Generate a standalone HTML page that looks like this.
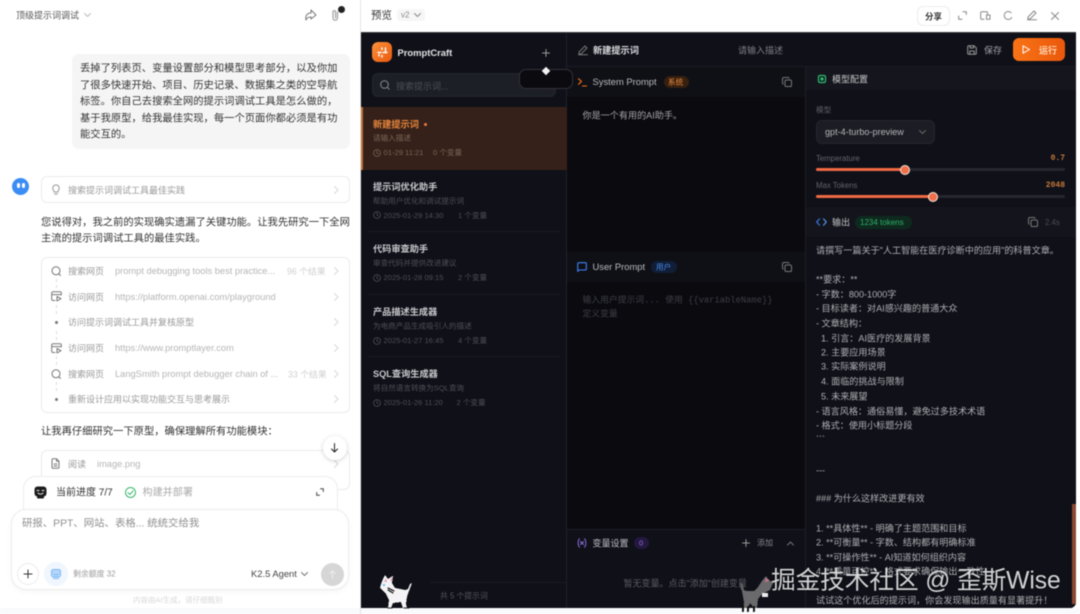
<!DOCTYPE html>
<html lang="zh"><head><meta charset="utf-8"><title>PromptCraft</title>
<style>
html,body{margin:0;padding:0;width:1080px;height:614px;overflow:hidden;background:#fff}
#r{position:absolute;left:0;top:0;width:1080px;height:614px;overflow:hidden;font-family:"Liberation Sans","Noto Sans CJK SC",sans-serif;filter:blur(.4px)}
.t{position:absolute;line-height:0;white-space:nowrap;font-size:9px;transform:translateY(.7px)}
.c{transform:translateY(1.5px)}
.b{position:absolute;box-sizing:border-box}
svg{position:absolute;overflow:visible;fill:none;stroke-linecap:round;stroke-linejoin:round}
.lt{font-size:10.3px;color:#333;transform:translateY(1.5px)}
.g{color:#999;font-size:9px}
.g2{color:#b5b5b5;font-size:9px;transform:none}
.ttl{font-size:9.2px;color:#c8c8cc;font-weight:700;transform:none}
.dsc{font-size:7.6px;color:#4e5058}
.met{font-size:7.6px;color:#4e5058;transform:none}
.o{font-size:9.1px;color:#b0b0b4}
</style></head><body><div id="r">

<!-- LEFT PANEL -->
<div class="t" style="left:16px;top:15px;color:#555">顶级提示词调试</div>
<svg style="left:84px;top:13px" width="7" height="5" stroke="#bbb"><path d="M.5 .5 3.500 3.500 6.500 .5"/></svg>
<svg style="left:304px;top:9px" width="13" height="13" stroke="#777" stroke-width="1"><path d="M7 1 12 6 7 10V8C4 8 3 9 2 11 1 7 3 4 7 4Z"/></svg>
<svg style="left:331px;top:9px" width="9" height="13" stroke="#999" stroke-width="1.100"><path d="M6.500 3V9A2 2 0 0 1 2 9V3A1.300 1.300 0 0 1 4.600 3V9"/></svg>
<div class="b" style="left:338px;top:5.500px;width:7px;height:7px;border-radius:50%;background:#222"></div>

<div class="b" style="left:72px;top:54px;width:278px;height:95px;background:#f5f5f5;border-radius:7px"></div>
<div class="t lt" style="left:80px;top:68px">丢掉了列表页、变量设置部分和模型思考部分，以及你加</div>
<div class="t lt" style="left:80px;top:85px">了很多快速开始、项目、历史记录、数据集之类的空导航</div>
<div class="t lt" style="left:80px;top:101px">标签。你自己去搜索全网的提示词调试工具是怎么做的，</div>
<div class="t lt" style="left:80px;top:118px">基于我原型，给我最佳实现，每一个页面你都必须是有功</div>
<div class="t lt" style="left:80px;top:134px">能交互的。</div>

<div class="b" style="left:12px;top:178px;width:17px;height:17px;border-radius:50%;background:#3a8df5"></div>
<div class="b" style="left:17px;top:183px;width:2.500px;height:5px;border-radius:2px;background:#fff"></div>
<div class="b" style="left:22px;top:183px;width:2.500px;height:5px;border-radius:2px;background:#fff"></div>

<div class="b" style="left:41px;top:176px;width:309px;height:27px;border:1px solid #ebebeb;border-radius:6px"></div>
<svg style="left:52px;top:184px" width="8" height="11" stroke="#999"><path d="M2 7C0 5 .5 1 4 1S8 5 6 7V8H2ZM2.500 10H5.500"/></svg>
<div class="t g" style="left:68px;top:190px">搜索提示词调试工具最佳实践</div>
<svg style="left:334px;top:186px" width="5" height="8" stroke="#d8d8d8"><path d="M.5 .5 4 4 .5 7.500"/></svg>

<div class="t c" style="left:41px;top:222px;font-size:10.3px;color:#333">您说得对，我之前的实现确实遗漏了关键功能。让我先研究一下全网</div>
<div class="t c" style="left:41px;top:238px;font-size:10.3px;color:#333">主流的提示词调试工具的最佳实践。</div>

<div class="b" style="left:41px;top:257px;width:309px;height:156px;border:1px solid #ebebeb;border-radius:6px"></div>
<div class="b" style="left:56px;top:279px;height:9px;border-left:1px dashed #ddd"></div>
<div class="b" style="left:56px;top:305px;height:9px;border-left:1px dashed #ddd"></div>
<div class="b" style="left:56px;top:331px;height:9px;border-left:1px dashed #ddd"></div>
<div class="b" style="left:56px;top:356px;height:9px;border-left:1px dashed #ddd"></div>
<div class="b" style="left:56px;top:382px;height:9px;border-left:1px dashed #ddd"></div>

<svg style="left:51px;top:266px" width="10" height="10" stroke="#777"><circle cx="5" cy="4.800" r="4"/><path d="M8 8 9.500 9.500"/></svg>
<div class="t g" style="left:68px;top:271px">搜索网页</div>
<div class="t g2" style="left:115px;top:271px;font-size:9.300px">prompt debugging tools best practice...</div>
<div class="t" style="left:287px;top:271px;font-size:8.800px;color:#d0d0d0">96 个结果</div>

<svg style="left:51px;top:291px" width="11" height="11" stroke="#777"><path d="M4 9.500H2A1.300 1.300 0 0 1 .7 8.200V2A1.300 1.300 0 0 1 2 .7H9A1.300 1.300 0 0 1 10.300 2V4M.7 3.600H10.300M6 5.500 10 7.700 6 10Z"/></svg>
<div class="t g" style="left:68px;top:296.500px">访问网页</div>
<div class="t g2" style="left:115px;top:296.500px;font-size:9.300px">https://platform.openai.com/playground</div>

<div class="b" style="left:54.500px;top:320.500px;width:3px;height:3px;border-radius:50%;background:#777"></div>
<div class="t g" style="left:68px;top:322px">访问提示词调试工具并复核原型</div>

<svg style="left:51px;top:343px" width="11" height="11" stroke="#777"><path d="M4 9.500H2A1.300 1.300 0 0 1 .7 8.200V2A1.300 1.300 0 0 1 2 .7H9A1.300 1.300 0 0 1 10.300 2V4M.7 3.600H10.300M6 5.500 10 7.700 6 10Z"/></svg>
<div class="t g" style="left:68px;top:348px">访问网页</div>
<div class="t g2" style="left:115px;top:348px;font-size:9.300px">https://www.promptlayer.com</div>

<svg style="left:51px;top:368.500px" width="10" height="10" stroke="#777"><circle cx="5" cy="4.800" r="4"/><path d="M8 8 9.500 9.500"/></svg>
<div class="t g" style="left:68px;top:373.500px">搜索网页</div>
<div class="t g2" style="left:115px;top:373.500px;font-size:9.300px">LangSmith prompt debugger chain of ...</div>
<div class="t" style="left:288px;top:373.500px;font-size:8.800px;color:#d0d0d0">33 个结果</div>

<div class="b" style="left:54.500px;top:397.500px;width:3px;height:3px;border-radius:50%;background:#777"></div>
<div class="t g" style="left:68px;top:399px">重新设计应用以实现功能交互与思考展示</div>

<svg style="left:334px;top:267px" width="5" height="8" stroke="#d8d8d8"><path d="M.5 .5 4 4 .5 7.500"/></svg>
<svg style="left:334px;top:292.500px" width="5" height="8" stroke="#d8d8d8"><path d="M.5 .5 4 4 .5 7.500"/></svg>
<svg style="left:334px;top:318px" width="5" height="8" stroke="#d8d8d8"><path d="M.5 .5 4 4 .5 7.500"/></svg>
<svg style="left:334px;top:344px" width="5" height="8" stroke="#d8d8d8"><path d="M.5 .5 4 4 .5 7.500"/></svg>
<svg style="left:334px;top:369.500px" width="5" height="8" stroke="#d8d8d8"><path d="M.5 .5 4 4 .5 7.500"/></svg>
<svg style="left:334px;top:395px" width="5" height="8" stroke="#d8d8d8"><path d="M.5 .5 4 4 .5 7.500"/></svg>

<div class="t c" style="left:41px;top:431px;font-size:10.3px;color:#333">让我再仔细研究一下原型，确保理解所有功能模块：</div>

<div class="b" style="left:41px;top:450px;width:309px;height:40px;border:1px solid #ebebeb;border-radius:6px"></div>
<svg style="left:51px;top:458px" width="9" height="11" stroke="#777"><path d="M1 1.500A1 1 0 0 1 2 .7H5.500L8 3.200V9.300A1 1 0 0 1 7 10.300H2A1 1 0 0 1 1 9.300ZM5.500 .7V3.200H8M3 6H6M3 8H6"/></svg>
<div class="t g" style="left:68px;top:464px">阅读</div>
<div class="t g2" style="left:97px;top:464px;font-size:9.300px">image.png</div>
<svg style="left:334px;top:460px" width="5" height="8" stroke="#d8d8d8"><path d="M.5 .5 4 4 .5 7.500"/></svg>

<div class="b" style="left:322.500px;top:436px;width:24px;height:24px;border-radius:50%;background:#fff;box-shadow:0 1px 5px rgba(0,0,0,.18)"></div>
<svg style="left:330px;top:443px" width="9" height="10" stroke="#222"><path d="M4.500 .5V9M1.500 6 4.500 9 7.500 6"/></svg>

<div class="b" style="left:23px;top:476px;width:315px;height:50px;background:#fff;border:1px solid #ececec;border-radius:13px"></div>
<svg style="left:34px;top:486px" width="13" height="13"><rect x=".5" y=".5" width="12" height="10" rx="3" fill="#1c1c1c"/><rect x="3" y="10" width="7" height="2.500" rx="1" fill="#1c1c1c"/><path d="M3 4.500H5M8 4.500H10M4 7C5.500 8.500 7.500 8.500 9 7" stroke="#eee" stroke-width=".9"/></svg>
<div class="t c" style="left:56px;top:492px;font-size:10px;color:#333">当前进度 7/7</div>
<svg style="left:125px;top:487px" width="11" height="11" stroke="#38b86c"><circle cx="5.500" cy="5.500" r="5"/><path d="M3 5.700 5 7.500 8 3.800"/></svg>
<div class="t c" style="left:142.500px;top:492px;font-size:10.100px;color:#aaa">构建并部署</div>
<svg style="left:316px;top:488px" width="8" height="8" stroke="#444"><path d="M4.500 .7H7.300V3.500M3.500 7.300H.7V4.500"/></svg>

<div class="b" style="left:11px;top:509px;width:338px;height:81px;background:#fff;border:1px solid #ececec;border-radius:15px;box-shadow:0 2px 6px rgba(0,0,0,.04)"></div>
<div class="t c" style="left:22px;top:523px;font-size:10.4px;color:#8f8f8f">研报、PPT、网站、表格... 统统交给我</div>
<div class="b" style="left:16.500px;top:563px;width:22px;height:22px;border-radius:50%;border:1px solid #ececec"></div>
<svg style="left:23.500px;top:570px" width="8" height="8" stroke="#333"><path d="M4 0V8M0 4H8"/></svg>
<div class="b" style="left:44px;top:562px;width:24px;height:24px;border-radius:50%;background:#eff6fe"></div>
<svg style="left:51px;top:569px" width="10" height="10" stroke="#7db7f5"><rect x=".5" y=".5" width="9" height="7.500" rx="2" fill="#b5d7fa"/><path d="M2.500 9.500H7.500M3 5C4 6.200 6 6.200 7 5"/></svg>
<div class="t" style="left:73px;top:574px;font-size:7.900px;color:#999">剩余额度 32</div>
<div class="t" style="left:251px;top:574px;font-size:9.400px;color:#444;transform:none">K2.5 Agent</div>
<svg style="left:301px;top:572px" width="7" height="5" stroke="#777"><path d="M.5 .5 3.500 3.500 6.500 .5"/></svg>
<div class="b" style="left:321px;top:563px;width:23px;height:23px;border-radius:50%;background:#d6d6d6"></div>
<svg style="left:329px;top:570px" width="7" height="9" stroke="#eee"><path d="M3.500 8.500V.8M.8 3.500 3.500 .8 6.200 3.500"/></svg>
<div class="t" style="left:133px;top:600px;font-size:7.500px;color:#d8d8d8">内容由AI生成，请仔细甄别</div>

<div class="b" style="left:0;top:608px;width:1080px;height:6px;background:#f8fafc"></div>
<div class="b" style="left:360px;top:0;width:1px;height:614px;background:#e4e4e4"></div>

<!-- RIGHT HEADER -->
<div class="t" style="left:371px;top:15px;font-size:10.500px;color:#333">预览</div>
<div class="b" style="left:397px;top:9px;width:28px;height:12px;border-radius:3px;background:#f6f6f6"></div>
<div class="t" style="left:401px;top:15px;font-size:8px;color:#888">v2</div>
<svg style="left:414px;top:13px" width="7" height="5" stroke="#888"><path d="M.5 .5 3.500 3.500 6.500 .5"/></svg>
<div class="b" style="left:917px;top:5.500px;width:33px;height:20px;border:1px solid #ececec;border-radius:6px"></div>
<div class="t" style="left:925px;top:15.500px;font-size:8.500px;color:#333;font-weight:700">分享</div>
<svg style="left:958px;top:11px" width="9" height="9" stroke="#888"><path d="M5 .7H8.300V3.500M4 8.300H.7V5"/></svg>
<svg style="left:980px;top:11px" width="11" height="9" stroke="#888"><path d="M4 8.300H1.500A1 1 0 0 1 .7 7.300V1.500A1 1 0 0 1 1.500 .7H6.500A1 1 0 0 1 7.500 1.500V3M6.500 4H10V8.300H6.500Z"/></svg>
<svg style="left:1003px;top:11px" width="10" height="9" stroke="#888"><path d="M8.700 6.500A4 4 0 1 1 8.200 1.800"/></svg>
<svg style="left:1027px;top:10px" width="10" height="10" stroke="#888"><path d="M1 7 7 1 9 3 3 9H1ZM.5 9.700H9.500"/></svg>
<svg style="left:1051px;top:11.500px" width="8" height="8" stroke="#888"><path d="M.5 .5 7.500 7.500M7.500 .5 .5 7.500"/></svg>

<!-- APP BACKGROUNDS -->
<div class="b" style="left:361px;top:32px;width:715px;height:576px;background:#0a0a0f;border-bottom-right-radius:6px;overflow:hidden;border-top:1px solid #3a3a3a"></div>
<div class="b" style="left:361px;top:33px;width:205px;height:575px;background:#0f1018"></div>
<div class="b" style="left:566px;top:33px;width:1px;height:575px;background:#20212a"></div>
<div class="b" style="left:805px;top:33px;width:271px;height:575px;background:#0f1018;border-left:1px solid #1e1f27;border-bottom-right-radius:6px"></div>
<div class="b" style="left:567px;top:33px;width:509px;height:34px;background:#0f1018;border-bottom:1px solid #1a1b22"></div>

<!-- sidebar -->
<div class="b" style="left:372px;top:42px;width:20px;height:20px;border-radius:6px;background:linear-gradient(135deg,#fb923c,#ea580c)"></div>
<svg style="left:376px;top:47px" width="12" height="11" stroke="#fff" stroke-width="1.400"><path d="M6 1V3M9.500 1V4.500M2 5.500H5M7 5.500H11M3 9V7.500M6 10V7.500" stroke-dasharray="1.500 1"/></svg>
<div class="t" style="left:397.500px;top:52.500px;font-size:9.400px;color:#e4e4e7;font-weight:700;transform:none">PromptCraft</div>
<svg style="left:541.500px;top:48.500px" width="8" height="8" stroke="#999"><path d="M4 .5V7.500M.5 4H7.500"/></svg>

<div class="b" style="left:372px;top:73px;width:184px;height:24px;border-radius:6px;background:#1d1f26;border:1px solid #25272e"></div>
<svg style="left:380px;top:80px" width="10" height="10" stroke="#8a8c94"><circle cx="4.500" cy="4.500" r="3.800"/><path d="M7.300 7.300 9.300 9.300"/></svg>
<div class="t" style="left:396px;top:85.500px;font-size:9px;color:#4d4f57">搜索提示词...</div>

<div class="b" style="left:361px;top:107px;width:206px;height:63px;background:#36211a;border-left:2px solid #c26f35"></div>
<div class="t" style="left:373px;top:124px;font-size:9.200px;color:#e8873c;font-weight:700">新建提示词</div>
<div class="b" style="left:423.500px;top:122.500px;width:3.500px;height:3.500px;border-radius:50%;background:#f0793a"></div>
<div class="t dsc" style="left:373px;top:138px;color:#7a6656">请输入描述</div>
<svg style="left:373px;top:149px" width="8" height="8" stroke="#7a6656" stroke-width=".8"><circle cx="4" cy="4" r="3.400"/><path d="M4 2V4L5.300 4.800"/></svg>
<div class="t met" style="left:383.500px;top:153px;color:#7a6656">01-29 11:21</div>
<div class="t met" style="left:433px;top:153px;color:#7a6656">0 个变量</div>

<div class="t ttl" style="left:373px;top:186.500px">提示词优化助手</div>
<div class="t dsc" style="left:373px;top:200.500px">帮助用户优化和调试提示词</div>
<svg style="left:373px;top:211px" width="8" height="8" stroke="#4e5058" stroke-width=".8"><circle cx="4" cy="4" r="3.400"/><path d="M4 2V4L5.300 4.800"/></svg>
<div class="t met" style="left:383.500px;top:215.500px">2025-01-29 14:30</div>
<div class="t met" style="left:458px;top:215.500px">1 个变量</div>
<div class="b" style="left:367px;top:231px;width:194px;height:1px;background:#191a22"></div>

<div class="t ttl" style="left:373px;top:249px">代码审查助手</div>
<div class="t dsc" style="left:373px;top:263px">审查代码并提供改进建议</div>
<svg style="left:373px;top:274px" width="8" height="8" stroke="#4e5058" stroke-width=".8"><circle cx="4" cy="4" r="3.400"/><path d="M4 2V4L5.300 4.800"/></svg>
<div class="t met" style="left:383.500px;top:278px">2025-01-28 09:15</div>
<div class="t met" style="left:458px;top:278px">2 个变量</div>
<div class="b" style="left:367px;top:293.500px;width:194px;height:1px;background:#191a22"></div>

<div class="t ttl" style="left:373px;top:311.500px">产品描述生成器</div>
<div class="t dsc" style="left:373px;top:325.500px">为电商产品生成吸引人的描述</div>
<svg style="left:373px;top:336.500px" width="8" height="8" stroke="#4e5058" stroke-width=".8"><circle cx="4" cy="4" r="3.400"/><path d="M4 2V4L5.300 4.800"/></svg>
<div class="t met" style="left:383.500px;top:340.500px">2025-01-27 16:45</div>
<div class="t met" style="left:458px;top:340.500px">4 个变量</div>
<div class="b" style="left:367px;top:356px;width:194px;height:1px;background:#191a22"></div>

<div class="t ttl" style="left:373px;top:374px">SQL查询生成器</div>
<div class="t dsc" style="left:373px;top:388px">将自然语言转换为SQL查询</div>
<svg style="left:373px;top:399px" width="8" height="8" stroke="#4e5058" stroke-width=".8"><circle cx="4" cy="4" r="3.400"/><path d="M4 2V4L5.300 4.800"/></svg>
<div class="t met" style="left:383.500px;top:403px">2025-01-26 11:20</div>
<div class="t met" style="left:456.500px;top:403px">2 个变量</div>

<div class="b" style="left:430px;top:582px;width:136px;height:1px;background:#1b1c24"></div>
<div class="t" style="left:440px;top:596px;font-size:7.800px;color:#55575f">共 5 个提示词</div>

<!-- main header -->
<svg style="left:578px;top:45px" width="10" height="10" stroke="#777"><path d="M1 7 7 1 9 3 3 9H1ZM.5 9.700H9.500"/></svg>
<div class="t" style="left:593px;top:49.500px;font-size:9.200px;color:#dcdce0;font-weight:700">新建提示词</div>
<div class="t" style="left:738px;top:49.500px;font-size:9px;color:#7d7f87">请输入描述</div>
<svg style="left:967px;top:45px" width="10" height="10" stroke="#999"><path d="M1.700 .7H7L9.300 3V8.300A1 1 0 0 1 8.300 9.300H1.700A1 1 0 0 1 .7 8.300V1.700A1 1 0 0 1 1.700 .7ZM3 .7V3H6.500V.7M2.800 9.300V6H7.200V9.300"/></svg>
<div class="t" style="left:984px;top:49.500px;font-size:9px;color:#a0a0a6">保存</div>
<div class="b" style="left:1013px;top:38px;width:52px;height:23px;border-radius:6px;background:linear-gradient(90deg,#f97316,#ea580c)"></div>
<svg style="left:1022px;top:45px" width="8" height="9" stroke="#fff" stroke-width="1"><path d="M1 .8 7.500 4.500 1 8.200Z"/></svg>
<div class="t" style="left:1039px;top:49.500px;font-size:9px;color:#ffd9b8;font-weight:700">运行</div>

<!-- system prompt -->
<div class="b" style="left:567px;top:67px;width:238px;height:30px;background:#0f1016"></div>
<svg style="left:578px;top:78px" width="9" height="9" stroke="#f97316" stroke-width="1.100"><path d="M.5 .8 3.500 3.500 .5 6.200M4.500 8H8.500"/></svg>
<div class="t" style="left:592.500px;top:82px;font-size:9.400px;color:#b9b9be;transform:none">System Prompt</div>
<div class="b" style="left:664px;top:76px;width:25px;height:12px;border-radius:6px;background:#36200f"></div>
<div class="t" style="left:668px;top:82px;font-size:7.600px;color:#e8873c">系统</div>
<svg style="left:781.500px;top:77px" width="10" height="10" stroke="#777"><rect x="3" y="3" width="6.500" height="6.500" rx="1.300"/><path d="M7 1.300A1 1 0 0 0 6 .5H1.800A1.300 1.300 0 0 0 .5 1.800V6A1 1 0 0 0 1.300 7"/></svg>
<div class="t" style="left:582.500px;top:115px;font-size:9.100px;color:#a5a5aa">你是一个有用的AI助手。</div>

<!-- user prompt -->
<div class="b" style="left:567px;top:252px;width:238px;height:30px;background:#0f1016"></div>
<svg style="left:577px;top:262px" width="10" height="10" stroke="#3b82f6" stroke-width="1.100"><path d="M1.700 .7H8.300A1 1 0 0 1 9.300 1.700V7A1 1 0 0 1 8.300 8H2L.7 9.300V1.700A1 1 0 0 1 1.700 .7Z"/></svg>
<div class="t" style="left:592.500px;top:267px;font-size:9.400px;color:#b9b9be;transform:none">User Prompt</div>
<div class="b" style="left:651px;top:261px;width:26px;height:12px;border-radius:6px;background:#101e38"></div>
<div class="t" style="left:656px;top:267px;font-size:7.600px;color:#4b8df0">用户</div>
<svg style="left:781.500px;top:262px" width="10" height="10" stroke="#777"><rect x="3" y="3" width="6.500" height="6.500" rx="1.300"/><path d="M7 1.300A1 1 0 0 0 6 .5H1.800A1.300 1.300 0 0 0 .5 1.800V6A1 1 0 0 0 1.300 7"/></svg>
<div class="t" style="left:582.500px;top:300px;font-size:8.800px;color:#3e3f46;font-family:'Liberation Mono','Noto Sans CJK SC',monospace">输入用户提示词... 使用 {{variableName}}</div>
<div class="t" style="left:582.500px;top:313px;font-size:8.800px;color:#3e3f46">定义变量</div>

<!-- variables -->
<div class="b" style="left:567px;top:529px;width:238px;height:79px;background:#0f1018;border-top:1px solid #1e1f27"></div>
<svg style="left:577px;top:538px" width="10" height="10" stroke="#8b6fd8"><path d="M2.500 .8C.7 2.500 .7 7.500 2.500 9.200M7.500 .8C9.300 2.500 9.300 7.500 7.500 9.200M3.500 3.500 6.500 6.500M6.500 3.500 3.500 6.500"/></svg>
<div class="t" style="left:592.500px;top:543px;font-size:9px;color:#c0c0c5">变量设置</div>
<div class="b" style="left:634px;top:537px;width:15px;height:12px;border-radius:6px;background:#24183f"></div>
<div class="t" style="left:639px;top:543px;font-size:7.600px;color:#8b6fd8">0</div>
<svg style="left:742px;top:539px" width="8" height="8" stroke="#999"><path d="M4 .5V7.500M.5 4H7.500"/></svg>
<div class="t" style="left:757px;top:542.500px;font-size:8px;color:#85878f">添加</div>
<svg style="left:786.500px;top:541px" width="7" height="5" stroke="#777"><path d="M.5 4 3.500 1 6.500 4"/></svg>
<div class="t" style="left:623.500px;top:582.500px;font-size:9px;color:#5b5d65">暂无变量。点击"添加"创建变量</div>

<!-- right pane -->
<div class="b" style="left:806px;top:67px;width:270px;height:23px;background:#15161d"></div>
<svg style="left:817px;top:74px" width="10" height="10" stroke="#2fbf71" stroke-width="1.200"><rect x="1.500" y="1.500" width="7" height="7" rx="1.500"/><rect x="3.500" y="3.500" width="3" height="3" fill="#2fbf71" stroke="none"/></svg>
<div class="t" style="left:832px;top:79px;font-size:9px;color:#c5c5ca">模型配置</div>
<div class="t" style="left:816px;top:109.500px;font-size:7.600px;color:#5f616a">模型</div>
<div class="b" style="left:816px;top:120px;width:119px;height:23.500px;border-radius:6px;background:#1c1d24;border:1px solid #25262e"></div>
<div class="t" style="left:825px;top:132px;font-size:9.100px;color:#b5b5ba;transform:none">gpt-4-turbo-preview</div>
<svg style="left:919px;top:130px" width="7" height="5" stroke="#666"><path d="M.5 .5 3.500 3.500 6.500 .5"/></svg>
<div class="t" style="left:816px;top:158.500px;font-size:7.800px;color:#62646d;transform:none">Temperature</div>
<div class="t" style="right:15px;top:158.500px;font-size:8px;color:#c87a3a;font-family:'Liberation Mono',monospace;font-weight:700;transform:none">0.7</div>
<div class="b" style="left:816px;top:168px;width:249px;height:2.500px;border-radius:2px;background:#26272e"></div>
<div class="b" style="left:816px;top:168px;width:89px;height:2.500px;border-radius:2px;background:#ee6a43"></div>
<div class="b" style="left:900px;top:164.500px;width:10px;height:10px;border-radius:50%;background:#f0704a;border:1.500px solid #f5e6de"></div>
<div class="t" style="left:816px;top:185.500px;font-size:7.800px;color:#62646d;transform:none">Max Tokens</div>
<div class="t" style="right:15px;top:185.500px;font-size:8px;color:#c87a3a;font-family:'Liberation Mono',monospace;font-weight:700;transform:none">2048</div>
<div class="b" style="left:816px;top:195px;width:249px;height:2.500px;border-radius:2px;background:#26272e"></div>
<div class="b" style="left:816px;top:195px;width:117px;height:2.500px;border-radius:2px;background:#ee6a43"></div>
<div class="b" style="left:928px;top:191.500px;width:10px;height:10px;border-radius:50%;background:#f0704a;border:1.500px solid #f5e6de"></div>

<div class="b" style="left:806px;top:207px;width:270px;height:30px;background:#14151c"></div>
<svg style="left:816px;top:218px" width="11" height="8" stroke-width="1.100"><path d="M3.500 .8.700 4 3.500 7.200" stroke="#3b82f6"/><path d="M7.500 .8 10.300 4 7.500 7.200" stroke="#5b9cf8"/></svg>
<div class="t" style="left:832px;top:222px;font-size:9px;color:#c5c5ca">输出</div>
<div class="b" style="left:855px;top:216px;width:57px;height:13px;border-radius:6.500px;background:#0e2a1e"></div>
<div class="t" style="left:860px;top:222.500px;font-size:8px;color:#2fae68;transform:none">1234 tokens</div>
<svg style="left:1028px;top:217px" width="10" height="10" stroke="#777"><rect x="3" y="3" width="6.500" height="6.500" rx="1.300"/><path d="M7 1.300A1 1 0 0 0 6 .5H1.800A1.300 1.300 0 0 0 .5 1.800V6A1 1 0 0 0 1.300 7"/></svg>
<div class="t" style="left:1045px;top:222.500px;font-size:7.800px;color:#4b4d55;transform:none">2.4s</div>

<div class="t o" style="left:816px;top:250px">请撰写一篇关于"人工智能在医疗诊断中的应用"的科普文章。</div>
<div class="t o" style="left:816px;top:279px">**要求：**</div>
<div class="t o" style="left:816px;top:294px">- 字数：800-1000字</div>
<div class="t o" style="left:816px;top:308px">- 目标读者：对AI感兴趣的普通大众</div>
<div class="t o" style="left:816px;top:323px">- 文章结构：</div>
<div class="t o" style="left:821px;top:338px">1. 引言：AI医疗的发展背景</div>
<div class="t o" style="left:821px;top:352px">2. 主要应用场景</div>
<div class="t o" style="left:821px;top:366px">3. 实际案例说明</div>
<div class="t o" style="left:821px;top:381px">4. 面临的挑战与限制</div>
<div class="t o" style="left:821px;top:396px">5. 未来展望</div>
<div class="t o" style="left:816px;top:411px">- 语言风格：通俗易懂，避免过多技术术语</div>
<div class="t o" style="left:816px;top:425px">- 格式：使用小标题分段</div>
<div class="t o" style="left:816px;top:439px">&#96;&#96;&#96;</div>
<div class="t o" style="left:816px;top:470px">---</div>
<div class="t o" style="left:816px;top:498px">### 为什么这样改进更有效</div>
<div class="t o" style="left:816px;top:528px">1. **具体性** - 明确了主题范围和目标</div>
<div class="t o" style="left:816px;top:542px">2. **可衡量** - 字数、结构都有明确标准</div>
<div class="t o" style="left:816px;top:557px">3. **可操作性** - AI知道如何组织内容</div>
<div class="t o" style="left:816px;top:571px">4. **质量可控** - 格式要求确保输出一致性</div>
<div class="t o" style="left:816px;top:600px">试试这个优化后的提示词，你会发现输出质量有显著提升！</div>

<div class="b" style="left:1072px;top:504px;width:4px;height:100px;background:#8a4a32"></div>

<!-- floating handle over sidebar and main -->
<div class="b" style="left:518.500px;top:69px;width:54px;height:20px;border-radius:7px;background:#0a0a0f;border:1px solid #33303a"></div>
<div class="b" style="left:542.500px;top:68px;width:6px;height:6px;background:#f2f2f2;transform:rotate(45deg)"></div>

<!-- pixel cat white -->
<svg style="left:380px;top:575px" width="40" height="38" shape-rendering="crispEdges">
<path d="M3 4 5 0 8 4 11 2 13 1 12 8 15 13 25 15 28 14 30 9 32 8 29 16 27 22 26 29 27 33H23L21 27 13 28 11 33H8L9 25 6 19 0 13 1 9Z" fill="#f5f3f5"/>
<path d="M10 5 12 2 12 7Z" fill="#e899b0"/><path d="M4 7 6 3 7 7Z" fill="#d9a8b8"/>
<rect x="3" y="9" width="2" height="2" fill="#5fc5ee"/>
<path d="M8 13 14 16M8 15 13 18M24 33H29M8 33H12" stroke="#222" stroke-width="1.300"/>
</svg>
<!-- pixel cat grey -->
<svg style="left:740px;top:575px" width="36" height="38" shape-rendering="crispEdges">
<path d="M1 10 2 16 4 27 3 33H8L10 28 14 33H17L18 24 22 19 30 15 33 8 28 4 26 1 22 6 18 12 14 16 7 16 3 15Z" fill="#6a6a6c"/>
<path d="M0 8 1 15 4 15 3 9Z" fill="#5e5e60"/>
<path d="M26 3 29 6 25 7Z" fill="#d0708c"/>
<rect x="22" y="18" width="6" height="4" fill="#eee"/>
<path d="M3 30 3 36M8 32 8 36M14 32 14 36" stroke="#111" stroke-width="2"/>
</svg>

<div class="t" style="left:771px;top:581px;font-size:24.700px;color:rgba(255,255,255,.82);letter-spacing:-.1px;text-shadow:0 0 2px rgba(0,0,0,.4)">掘金技术社区 @ 歪斯Wise</div>

</div></body></html>
